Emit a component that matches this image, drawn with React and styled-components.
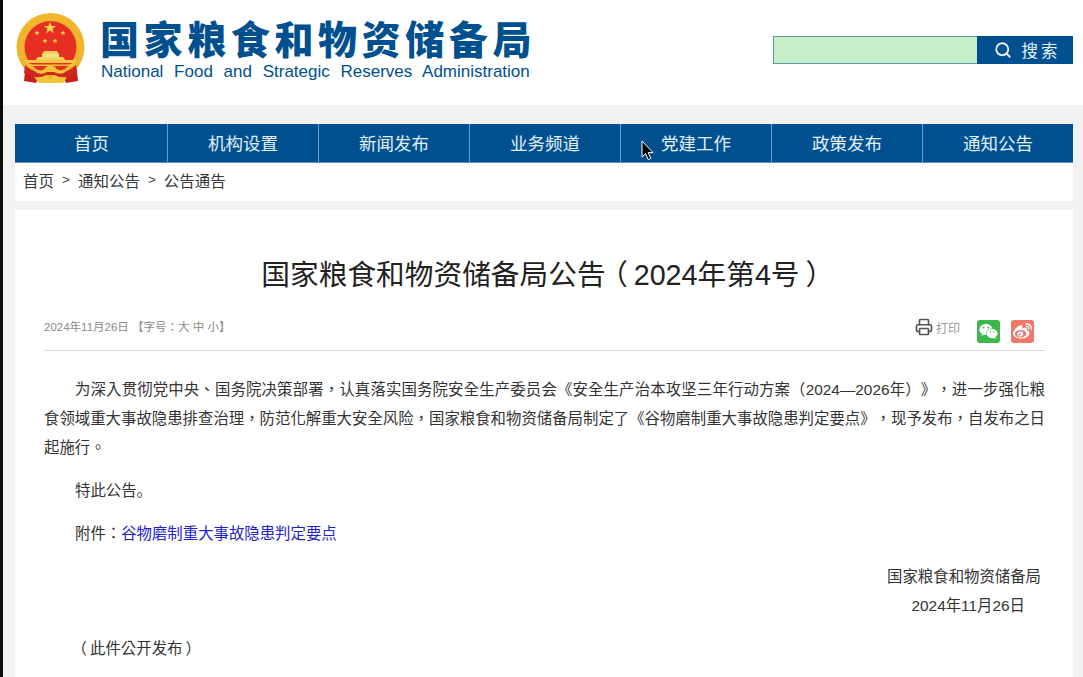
import React from "react";
import styled, { createGlobalStyle } from "styled-components";
import { Search, Printer } from "lucide-react";
import { FaWeibo, FaWeixin } from "react-icons/fa";

const FONT = `"Liberation Sans", "Noto Sans CJK SC", sans-serif`;
// the TC face centres full-width commas and colons, as the reference does
const FONT_CENTRED = `"Liberation Sans", "Noto Sans CJK TC", sans-serif`;
const BLUE = "#00508f";

const NAV_ITEMS = ["首页", "机构设置", "新闻发布", "业务频道", "党建工作", "政策发布", "通知公告"];

const Global = createGlobalStyle`
  html, body {
    margin: 0;
    height: 677px;
    overflow: hidden;
    background: #f2f2f2;
  }
  body {
    font-family: ${FONT};
    color: #333;
    text-spacing-trim: space-all;
  }
`;

const Page = styled.div`
  position: relative;
  height: 677px;
  overflow: hidden;
  border-left: 3px solid #0c0c0c;
`;
const Header = styled.header`
  display: flex;
  align-items: flex-start;
  justify-content: space-between;
  height: 105px;
  padding: 0 10px 0 13px;
  background: #fff;
`;
const Brand = styled.div`
  display: flex;
  align-items: flex-start;
  padding-top: 13px;
`;
const Emblem = styled.svg`
  display: block;
  width: 70px;
  height: 73px;
`;
const BrandText = styled.div`
  margin-left: 14px;
  padding-top: 5px;
`;
const BrandCn = styled.div`
  font-size: 39px;
  line-height: 46px;
  font-weight: 900;
  letter-spacing: 4.6px;
  color: ${BLUE};
  white-space: nowrap;
`;
const BrandEn = styled.div`
  margin-top: -2px;
  margin-left: 1px;
  font-size: 17px;
  line-height: 20px;
  word-spacing: 6px;
  color: ${BLUE};
  white-space: nowrap;
`;
const SearchBox = styled.div`
  display: flex;
  width: 300px;
  height: 28px;
  margin-top: 36px;
`;
const SearchInput = styled.div`
  flex: 1;
  box-sizing: border-box;
  border: 1px solid #5c99ad;
  border-right: 0;
  background: #c6eec9;
`;
const SearchButton = styled.div`
  display: flex;
  align-items: center;
  justify-content: center;
  gap: 10px;
  box-sizing: border-box;
  width: 96px;
  padding-left: 4px;
  background: ${BLUE};
  color: #e8f3fa;
  font-size: 16.5px;
  letter-spacing: 3px;
`;
const Main = styled.main`
  padding: 19px 10px 0 12px;
`;
const Nav = styled.nav`
  display: flex;
  height: 39px;
  padding-left: 1px;
  background: ${BLUE};
  border-bottom: 1px solid #5f97c2;
  box-sizing: border-box;
`;
const NavItem = styled.a`
  flex: 0 0 151px;
  box-sizing: border-box;
  display: flex;
  align-items: center;
  justify-content: center;
  padding-bottom: 2px;
  font-size: 17.5px;
  color: #e3f0f9;
  border-left: ${(p) => (p.$first ? "0" : "1px solid #6a9ec6")};
`;
const Crumbs = styled.div`
  display: flex;
  align-items: center;
  gap: 8px;
  box-sizing: border-box;
  height: 38px;
  padding: 0 0 5px 8px;
  background: #fff;
  font-size: 15.5px;
  color: #3a3a3a;
`;
const CrumbSep = styled.span`
  font-size: 13.5px;
  color: #444;
`;
const Card = styled.article`
  margin-top: 9px;
  height: 480px;
  padding: 0 28px 0 29px;
  background: #fff;
`;
const Title = styled.h1`
  margin: 0;
  padding-top: 47px;
  font-size: 28.7px;
  line-height: 36px;
  font-weight: 400;
  text-align: center;
  color: #222;
`;
const Meta = styled.div`
  display: flex;
  align-items: flex-start;
  justify-content: space-between;
  height: 36px;
  margin-top: 21px;
  border-bottom: 1px solid #d9d9d9;
  font-family: ${FONT_CENTRED};
  font-size: 11.5px;
  line-height: 26px;
  color: #8a8a8a;
`;
const MetaTools = styled.div`
  display: flex;
  align-items: flex-start;
  margin: 6px 11px 0 0;
`;
const PrintLink = styled.span`
  display: flex;
  align-items: center;
  gap: 3px;
  height: 18px;
  margin-right: 17px;
  font-size: 12px;
  line-height: 18px;
  color: #999;
`;
const PrintIcon = styled(Printer)`
  margin-top: -4px;
`;
const Share = styled.span`
  display: flex;
  align-items: center;
  justify-content: center;
  width: 23px;
  height: 23px;
  margin-left: ${(p) => (p.$gap ? "11px" : "0")};
  border-radius: 3px;
  background: ${(p) => p.$bg};
  color: #fff;
`;
const Body = styled.div`
  padding-top: 24px;
  font-family: ${FONT_CENTRED};
  font-size: 15.4px;
  line-height: 29px;
  color: #333;
`;
const Para = styled.p`
  margin: 0 0 14px;
  text-indent: 31px;
  text-align: justify;
  font-family: ${(p) => (p.$lowStop ? FONT : "inherit")};
`;
const FileLink = styled.a`
  color: #2222cc;
`;
const Sign = styled.p`
  margin: ${(p) => (p.$first ? "14px 0 0" : "0 0 14px")};
  padding-right: ${(p) => p.$right};
  text-align: right;
`;
// brackets sit against the text in this font: take the narrow glyph, pad it back to 1em
const Paren = styled.span`
  font-feature-settings: "palt";
  padding: 0 0.24em;
`;
const Cursor = styled.svg`
  position: absolute;
  left: 638px;
  top: 140px;
  width: 13px;
  height: 21px;
`;

const withParens = (text) =>
  text.split(/([（）])/).map((part, i) =>
    i % 2 ? <Paren key={i}>{part}</Paren> : part
  );

const starPoints = (cx, cy, r) =>
  Array.from({ length: 10 }, (_, i) => {
    const a = (Math.PI / 5) * i - Math.PI / 2;
    const d = i % 2 ? r * 0.4 : r;
    return `${(cx + d * Math.cos(a)).toFixed(2)},${(cy + d * Math.sin(a)).toFixed(2)}`;
  }).join(" ");

const NationalEmblem = () => (
  <Emblem viewBox="0 0 70 73">
    <path d="M10 50 L8 68 L20 70 L24 62 L46 62 L50 70 L62 68 L60 50 Z" fill="#c9201c" />
    <circle cx="34.5" cy="34" r="34" fill="#f0b52c" />
    <circle cx="34.5" cy="34" r="26" fill="#e62f22" />
    <polygon points={starPoints(34, 15, 6.5)} fill="#f8d24a" />
    <polygon points={starPoints(21, 20, 2.8)} fill="#f8d24a" />
    <polygon points={starPoints(47, 20, 2.8)} fill="#f8d24a" />
    <polygon points={starPoints(29, 28, 2.8)} fill="#f8d24a" />
    <polygon points={starPoints(39, 28, 2.8)} fill="#f8d24a" />
    <path d="M28 38 H41 L43 41 H26 Z" fill="#f6cf55" />
    <rect x="26" y="41" width="17" height="3" fill="#f9e08a" />
    <path d="M22 44 H47 L50 48 H19 Z" fill="#f7d35f" />
    <path d="M9 47 H60 L57 53 H12 Z" fill="#f6c63f" />
    <path d="M12 50 H57 L53 51.5 H16 Z" fill="#e62f22" />
    <path d="M9 52 Q22 64 31 56 Q34 53 38 56 Q47 64 60 52 L61 60 Q47 69 38 62 H31 Q22 69 8 60 Z" fill="#d3261f" />
    <path d="M17 56 Q26 60 30 54 Q34 51 39 54 Q43 60 52 56 L48 60 Q42 62 38 59 H31 Q27 62 21 60 Z" fill="#f3c338" />
    <path d="M18 64 Q26 65 30 62 L34 66 L39 62 Q43 65 51 64 L47 70 H23 Z" fill="#f3c338" />
  </Emblem>
);

export default function App() {
  return (
    <>
      <Global />
      <Page>
        <Header>
          <Brand>
            <NationalEmblem />
            <BrandText>
              <BrandCn>国家粮食和物资储备局</BrandCn>
              <BrandEn>National Food and Strategic Reserves Administration</BrandEn>
            </BrandText>
          </Brand>
          <SearchBox>
            <SearchInput />
            <SearchButton>
              <Search size={18} strokeWidth={2.4} />
              搜索
            </SearchButton>
          </SearchBox>
        </Header>
        <Main>
          <Nav>
            {NAV_ITEMS.map((item, i) => (
              <NavItem key={item} $first={i === 0}>{item}</NavItem>
            ))}
          </Nav>
          <Crumbs>
            <span>首页</span>
            <CrumbSep>&gt;</CrumbSep>
            <span>通知公告</span>
            <CrumbSep>&gt;</CrumbSep>
            <span>公告通告</span>
          </Crumbs>
          <Card>
            <Title>{withParens("国家粮食和物资储备局公告（2024年第4号）")}</Title>
            <Meta>
              <span>2024年11月26日 【字号：大 中 小】</span>
              <MetaTools>
                <PrintLink>
                  <PrintIcon size={18} color="#555" strokeWidth={2.2} />
                  打印
                </PrintLink>
                <Share $bg="#3cb94a"><FaWeixin size={19} /></Share>
                <Share $bg="#f0776a" $gap><FaWeibo size={19} /></Share>
              </MetaTools>
            </Meta>
            <Body>
              <Para>
                为深入贯彻党中央、国务院决策部署，认真落实国务院安全生产委员会《安全生产治本攻坚三年行动方案（2024—2026年）》，进一步强化粮食领域重大事故隐患排查治理，防范化解重大安全风险，国家粮食和物资储备局制定了《谷物磨制重大事故隐患判定要点》，现予发布，自发布之日起施行。
              </Para>
              <Para $lowStop>特此公告。</Para>
              <Para>附件：<FileLink>谷物磨制重大事故隐患判定要点</FileLink></Para>
              <Sign $first $right="4px">国家粮食和物资储备局</Sign>
              <Sign $right="20px">2024年11月26日</Sign>
              <Para>{withParens("（此件公开发布）")}</Para>
            </Body>
          </Card>
        </Main>
        <Cursor viewBox="0 0 13 21">
          <path d="M1 1 V17 L4.6 13.6 L7.2 19.6 L9.8 18.4 L7.2 12.6 H12 Z" fill="#000" stroke="#fff" strokeWidth="1" />
        </Cursor>
      </Page>
    </>
  );
}
